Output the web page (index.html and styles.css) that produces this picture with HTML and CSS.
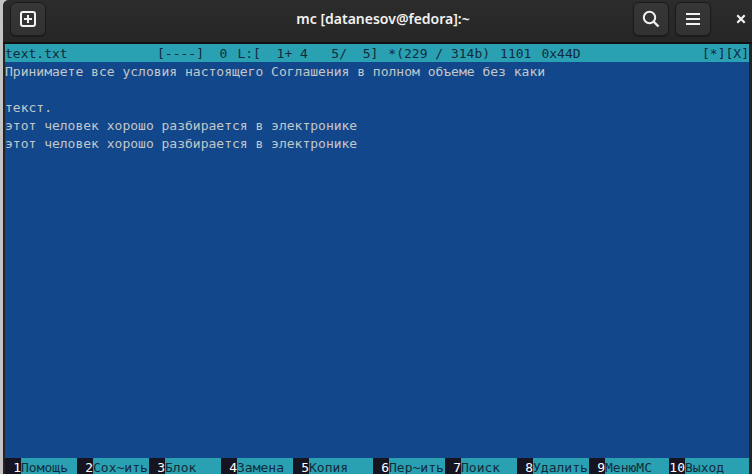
FILE: index.html
```
<!DOCTYPE html>
<html lang="ru">
<head>
<meta charset="utf-8">
<title>mc [datanesov@fedora]:~</title>
<link rel="stylesheet" href="styles.css">
</head>
<body>
<div class="window">
  <header class="titlebar">
    <div class="side">
      <button class="tool" type="button" aria-label="Новая вкладка">
        <svg width="18" height="18" viewBox="0 0 18 18" fill="none" stroke="currentColor" stroke-width="2"><rect x="2" y="2" width="14" height="14" rx="2"/><path d="M9 5v8M5 9h8"/></svg>
      </button>
    </div>
    <h1 class="title">mc [datanesov@fedora]:~</h1>
    <div class="side side-end">
      <button class="tool" type="button" aria-label="Поиск">
        <svg width="18" height="18" viewBox="0 0 18 18" fill="none" stroke="currentColor" stroke-width="2"><circle cx="7.5" cy="7.5" r="5.7"/><path d="M11.5 11.5l5 5" stroke-width="2.4"/></svg>
      </button>
      <button class="tool" type="button" aria-label="Меню">
        <svg width="18" height="18" viewBox="0 0 18 18" fill="none" stroke="currentColor" stroke-width="2"><path d="M2 4h14M2 9h14M2 14h14"/></svg>
      </button>
      <button class="close" type="button" aria-label="Закрыть">
        <svg width="10" height="10" viewBox="0 0 10 10" fill="none" stroke="currentColor" stroke-width="2.2"><path d="M1.3 1.3l7.4 7.4M8.7 1.3L1.3 8.7"/></svg>
      </button>
    </div>
  </header>
  <main class="terminal">
    <div class="status">
      <span class="file">text.txt</span>
      <span class="info"><span>[----]  0</span><span>L:[  1+ 4   5/  5]</span><span>*(229 / 314b)</span><span>1101</span><span>0x44D</span></span>
      <span>[*][X]</span>
    </div>
    <pre class="text">Принимаете все условия настоящего Соглашения в полном объеме без каки

текст.
этот человек хорошо разбирается в электронике
этот человек хорошо разбирается в электронике</pre>
    <nav class="keys">
      <button type="button"><b>1</b>Помощь</button>
      <button type="button"><b>2</b>Сох~ить</button>
      <button type="button"><b>3</b>Блок</button>
      <button type="button"><b>4</b>Замена</button>
      <button type="button"><b>5</b>Копия</button>
      <button type="button"><b>6</b>Пер~ить</button>
      <button type="button"><b>7</b>Поиск</button>
      <button type="button"><b>8</b>Удалить</button>
      <button type="button"><b>9</b>МенюМС</button>
      <button type="button"><b>10</b>Выход</button>
    </nav>
  </main>
</div>
</body>
</html>
```
FILE: styles.css
```
* { box-sizing: border-box; }

body {
  margin: 0;
  height: 100vh;
  overflow: hidden;
  background: #c4c4c4;
}

.window {
  display: flex;
  flex-direction: column;
  height: calc(100vh + 2px);
  margin-left: 3px;
  background: #242424;
  border-top-left-radius: 6px;
}

.titlebar {
  display: flex;
  align-items: center;
  height: 44px;
  padding: 0 6px 4px 7px;
  background: linear-gradient(#2c2c2c, #262626);
  border-bottom: 2px solid #121212;
  border-top-left-radius: 6px;
  color: #f2f2f1;
}

.side {
  display: flex;
  flex: 1;
  align-items: center;
  gap: 6px;
}

.side-end { justify-content: flex-end; }

.title {
  margin: 0;
  padding-left: 10px;
  font: 600 14px/20px "Noto Sans", "Open Sans", sans-serif;
}

button {
  margin: 0;
  padding: 0;
  border: 0;
  background: none;
  color: inherit;
  font: inherit;
}

.tool {
  display: grid;
  place-items: center;
  width: 36px;
  height: 34px;
  border: 1px solid #1b1b1b;
  border-radius: 6px;
  background: linear-gradient(#363636, #323232);
  box-shadow: 0 1px 1px #1b1b1b;
}

.close {
  display: grid;
  place-items: center;
  width: 10px;
  height: 34px;
  margin-left: 19px;
}

.terminal {
  display: flex;
  flex: 1;
  flex-direction: column;
  margin: 0 3px 0 2px;
  background: #12488b;
  font: 13px/18px "DejaVu Sans Mono", monospace;
}

.status {
  display: flex;
  padding-top: 2px;
  line-height: 16px;
  white-space: pre;
  background: #2aa1b3;
  color: #122b3b;
}

.file { width: 152px; }

.info {
  display: flex;
  flex: 1;
  gap: 10px;
}

.text {
  flex: 1;
  margin: 0;
  padding-top: 1px;
  color: #c3c7ca;
  font: inherit;
}

.keys {
  display: grid;
  grid-template-columns: 9fr 9fr 9fr 9fr 10fr 9fr 9fr 9fr 10fr 10fr;
  line-height: 16px;
  background: #2aa1b3;
  color: #122b3b;
}

.keys button {
  display: flex;
  min-width: 0;
  white-space: pre;
}

.keys b {
  width: 16px;
  padding-top: 2px;
  background: #171421;
  color: #ffffff;
  font-weight: 400;
  text-align: right;
}

.keys button {
  align-items: flex-end;
}
```
